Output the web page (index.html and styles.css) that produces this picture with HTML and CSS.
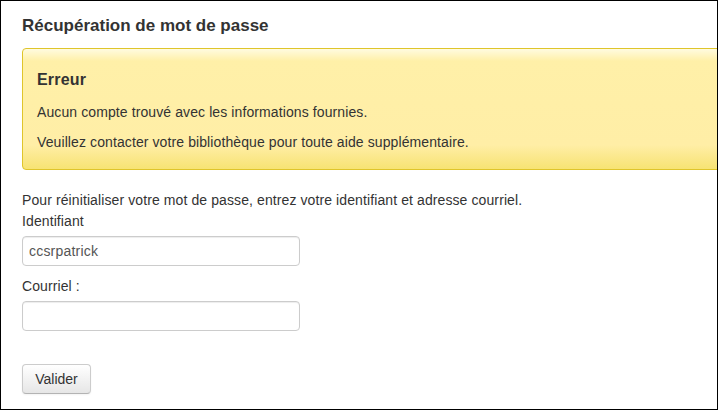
FILE: index.html
```html
<!DOCTYPE html>
<html lang="fr">
<head>
<meta charset="utf-8">
<title>Récupération de mot de passe</title>
<link rel="stylesheet" href="styles.css">
</head>
<body>
<div class="frame">
  <h1 class="title">Récupération de mot de passe</h1>
  <div class="alert">
    <h2 class="alert-title">Erreur</h2>
    <p class="alert-text">Aucun compte trouvé avec les informations fournies.</p>
    <p class="alert-text">Veuillez contacter votre bibliothèque pour toute aide supplémentaire.</p>
  </div>
  <form class="form">
    <p class="intro">Pour réinitialiser votre mot de passe, entrez votre identifiant et adresse courriel.</p>
    <label class="label" for="uid">Identifiant</label>
    <input class="field" id="uid" type="text" value="ccsrpatrick">
    <label class="label" for="mail">Courriel :</label>
    <input class="field" id="mail" type="text" value="">
    <button class="btn" type="button">Valider</button>
  </form>
</div>
</body>
</html>
```

FILE: styles.css
```css
html, body {
  margin: 0;
  padding: 0;
  background: #ffffff;
}

body {
  font-family: "Liberation Sans", Arial, sans-serif;
  color: #333333;
  font-size: 14px;
  line-height: 18px;
  letter-spacing: 0.1px;
}

.frame {
  box-sizing: border-box;
  width: 718px;
  height: 410px;
  border: 1px solid #000000;
  padding: 15px 0 0 21px;
  overflow: hidden;
}

.title {
  font-size: 17px;
  line-height: 20px;
  font-weight: bold;
  letter-spacing: 0;
  margin: 0 0 12px;
  color: #333333;
}

.alert {
  box-sizing: border-box;
  width: 720px;
  border: 1px solid #dfc52b;
  border-radius: 4px;
  padding: 8px 35px 8px 14px;
  margin-bottom: 20px;
  background: linear-gradient(to bottom, #fffbe0 0px, #fff0a8 12px, #ffeea6 80%, #f7e373 100%);
}

.alert-title {
  font-size: 16px;
  line-height: 20px;
  font-weight: bold;
  letter-spacing: 0.2px;
  margin: 13px 0 13px;
}

.alert-text {
  margin: 0 0 12px;
}

.alert-text:last-child {
  margin-bottom: 10px;
}

.form {
  display: flex;
  flex-direction: column;
  align-items: flex-start;
}

.intro {
  margin: 1px 0 0;
}

.label {
  display: block;
  margin-top: 3px;
}

.field {
  box-sizing: border-box;
  width: 278px;
  height: 30px;
  margin: 6px 0 8px;
  padding: 4px 6px;
  border: 1px solid #cccccc;
  border-radius: 4px;
  font-family: "Liberation Sans", Arial, sans-serif;
  font-size: 14px;
  letter-spacing: 0.2px;
  color: #555555;
  background: #ffffff;
  box-shadow: inset 0 1px 1px rgba(0, 0, 0, 0.075);
}

.btn {
  box-sizing: border-box;
  width: 69px;
  height: 30px;
  margin-top: 25px;
  border: 1px solid #cccccc;
  border-bottom-color: #b3b3b3;
  border-radius: 4px;
  background: linear-gradient(to bottom, #ffffff, #e6e6e6);
  font-family: "Liberation Sans", Arial, sans-serif;
  font-size: 14px;
  color: #333333;
  box-shadow: 0 1px 2px rgba(0, 0, 0, 0.05);
}
```
